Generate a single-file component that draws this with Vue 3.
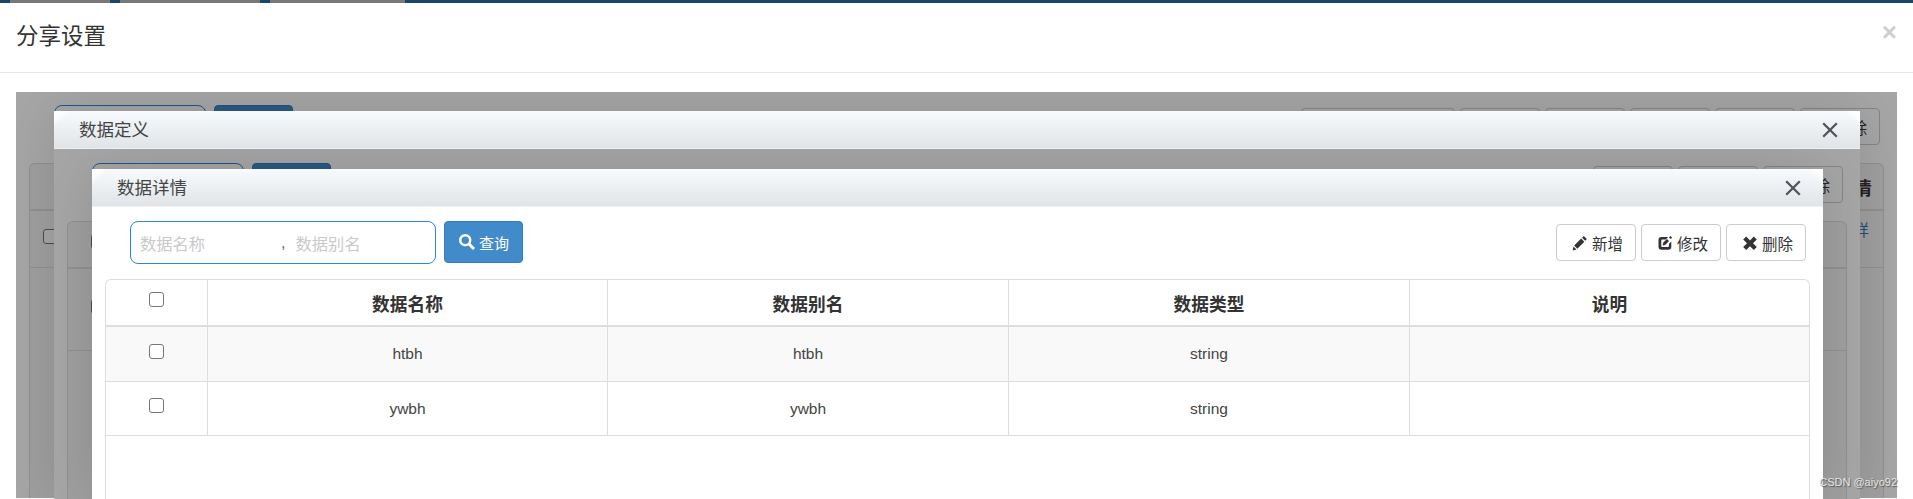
<script setup>
const icons = {
  pencil: 'M11.8 1l3.1 3.1-1.7 1.7-3.1-3.1zM9.2 3.6l3.1 3.1-7 7-3.1-3.1zM1.5 11.4l3 3-3.9 1z',
  edit: 'M4.4 2h6.8L8.8 4.4H5a.7.7 0 0 0-.7.7v6.2c0 .4.3.7.7.7h6.2c.4 0 .7-.3.7-.7V9l2.4-2.4v5.2a3 3 0 0 1-3 3H4.5a3 3 0 0 1-3-3V5a3 3 0 0 1 2.9-3zM6.3 7.6l3.6-3.6 2.1 2.1-3.6 3.6-2.8.7zM12 2.4l1.5-1.5 1.7 1.7-1.5 1.5z',
  remove: 'M4.2 1.6L8 5.4l3.8-3.8 3 3L11 8.3l3.8 3.8-3 3L8 11.3l-3.8 3.8-3-3L5 8.3 1.2 4.6z'
}

const topStrip = ['dark', 'dim', 'dark', 'dim', 'dark', 'dim', 'rest']

const layers = [
  {
    id: 1,
    buttons: [
      { label: '查看数据定义', icon: 'edit', wide: true },
      { label: '新增', icon: 'pencil' },
      { label: '修改', icon: 'edit' },
      { label: '复制', icon: 'edit' },
      { label: '分享', icon: 'edit' },
      { label: '删除', icon: 'remove' }
    ],
    noHeadCheck: true,
    cols: [{ label: '', width: '42px' }, { label: '' }, { label: '详情', width: '58px' }],
    rows: [['', '详']]
  },
  {
    id: 2,
    title: '数据定义',
    buttons: [
      { label: '新增', icon: 'pencil' },
      { label: '修改', icon: 'edit' },
      { label: '删除', icon: 'remove' }
    ],
    cols: [{ label: '', width: '61px' }, { label: '' }],
    rows: [['']]
  },
  {
    id: 3,
    title: '数据详情',
    first: '数据名称',
    second: '数据别名',
    buttons: [
      { label: '新增', icon: 'pencil' },
      { label: '修改', icon: 'edit' },
      { label: '删除', icon: 'remove' }
    ],
    cols: [
      { label: '', width: '102px' },
      { label: '数据名称', width: '400px' },
      { label: '数据别名', width: '401px' },
      { label: '数据类型', width: '401px' },
      { label: '说明' }
    ],
    rows: [
      ['htbh', 'htbh', 'string', ''],
      ['ywbh', 'ywbh', 'string', '']
    ]
  }
]
</script>

<template>
  <div class="page">
    <div class="strip">
      <span v-for="(seg, i) in topStrip" :key="i" :class="['seg', seg]"></span>
    </div>

    <header class="head">
      <h4>分享设置</h4>
      <span class="close">×</span>
    </header>

    <main class="body">
      <div class="frame">
        <section v-for="layer in layers" :key="layer.id" :class="['win', 'win-' + layer.id]">
          <div v-if="layer.title" class="win-head">
            <span>{{ layer.title }}</span>
            <svg class="win-close" viewBox="0 0 16 16">
              <path d="M1.2 1.2L14.8 14.8M14.8 1.2L1.2 14.8" />
            </svg>
          </div>

          <div class="win-body">
            <div class="toolbar">
              <div class="search-group">
                <div class="search">
                  <template v-if="layer.first">
                    <span class="holder">{{ layer.first }}</span>
                    <span class="comma">,</span>
                    <span class="holder">{{ layer.second }}</span>
                  </template>
                </div>
                <button class="btn-query">
                  <svg class="search-icon" viewBox="0 0 18 18">
                    <circle cx="7.2" cy="7.2" r="5" />
                    <path d="M11 11l5 5" />
                  </svg>
                  查询
                </button>
              </div>
              <div class="actions">
                <button
                  v-for="btn in layer.buttons"
                  :key="btn.label"
                  :class="['btn', { wide: btn.wide }]"
                >
                  <svg class="icon" viewBox="0 0 16 16"><path :d="icons[btn.icon]" /></svg>
                  {{ btn.label }}
                </button>
              </div>
            </div>

            <div class="table-wrap">
              <table>
                <colgroup>
                  <col v-for="(col, i) in layer.cols" :key="i" :style="{ width: col.width }" />
                </colgroup>
                <thead>
                  <tr>
                    <th v-for="(col, i) in layer.cols" :key="i">
                      <template v-if="i === 0">
                        <input v-if="!layer.noHeadCheck" type="checkbox" class="check" />
                      </template>
                      <template v-else>{{ col.label }}</template>
                    </th>
                  </tr>
                </thead>
                <tbody>
                  <tr v-for="(row, r) in layer.rows" :key="r" :class="{ odd: r % 2 === 0 }">
                    <td><input type="checkbox" class="check" /></td>
                    <td v-for="(cell, c) in row" :key="c">
                      <a v-if="cell === '详'" class="link">{{ cell }}</a>
                      <template v-else>{{ cell }}</template>
                    </td>
                  </tr>
                </tbody>
              </table>
            </div>

            <div v-if="layer.id < 3" class="mask"></div>
          </div>
        </section>
      </div>
    </main>

    <span class="mark">CSDN @aiyo92</span>
  </div>
</template>

<style>
html, body {
  margin: 0;
  height: 100%;
  overflow: hidden;
  background: #fff;
}
</style>

<style scoped>
.page {
  position: relative;
  height: 499px;
  display: flex;
  flex-direction: column;
  overflow: hidden;
  background: #fff;
  color: #333;
  font-family: "Liberation Sans", "Noto Sans CJK SC", sans-serif;
}

.strip {
  display: flex;
  height: 3px;
  flex: none;
}

.seg.dark {
  width: 10px;
  background: #1d456b;
}

.seg.dim {
  width: 100px;
  background: #787878;
}

.seg.dim:nth-child(4) {
  width: 140px;
}

.seg.dim:nth-child(6) {
  width: 135px;
}

.seg.rest {
  flex: 1;
  background: #1d456b;
}

.head {
  flex: none;
  height: 69px;
  box-sizing: content-box;
  display: flex;
  align-items: center;
  justify-content: space-between;
  padding: 0 16px;
  border-bottom: 1px solid #e5e5e5;
}

.head h4 {
  margin: 0 0 7px;
  font-size: 22.5px;
  font-weight: 400;
  color: #333;
}

.close {
  font-size: 26px;
  font-weight: 700;
  line-height: 1;
  color: #cfcfcf;
  margin-top: -12px;
}

.body {
  flex: 1;
  min-height: 0;
  padding: 19px 16px 0;
}

.frame {
  position: relative;
  height: 100%;
  overflow: hidden;
  background: #fff;
}

.win {
  display: flex;
  flex-direction: column;
  background: #fff;
}

.win-1 {
  height: 100%;
  margin-top: -1px;
}

.win-2, .win-3 {
  position: absolute;
  bottom: 0;
  box-shadow: 0 0 50px rgba(0, 0, 0, .13);
}

.win-2 {
  left: 38px;
  right: 37px;
  top: 19px;
}

.win-3 {
  left: 76px;
  right: 74px;
  top: 77px;
  clip-path: inset(-20px -37px 0 -38px);
}

.win-head {
  flex: none;
  height: 38px;
  box-sizing: border-box;
  display: flex;
  align-items: center;
  justify-content: space-between;
  padding: 0 22px 2px 25px;
  font-size: 17.5px;
  color: #444;
  border-bottom: 1px solid #eef0f2;
  background:
    linear-gradient(135deg, #fff 4px, rgba(255, 255, 255, 0) 12px),
    linear-gradient(225deg, #fff 4px, rgba(255, 255, 255, 0) 12px),
    linear-gradient(#f8fbfd, #e0e4e7);
  border-radius: 6px 6px 0 0;
}

.win-close {
  width: 16px;
  height: 16px;
  margin-top: 2px;
  fill: none;
  stroke: #50555c;
  stroke-width: 2.3;
}

.win-body {
  position: relative;
  flex: 1;
  min-height: 0;
  display: flex;
  flex-direction: column;
  padding: 14px 13px 0;
}

.mask {
  position: absolute;
  inset: 0;
  background: rgba(0, 0, 0, .35);
}

.toolbar {
  flex: none;
  height: 58px;
  display: flex;
  justify-content: space-between;
  align-items: flex-start;
  margin: 0 4px 0 25px;
}

.search-group {
  display: flex;
  gap: 8px;
}

.search {
  box-sizing: border-box;
  width: 152px;
  height: 43px;
  display: flex;
  align-items: center;
  padding: 0 9px;
  border: 1px solid #2a86e0;
  border-radius: 8px;
  background: #fff;
  font-size: 16.3px;
  color: #c9c9c9;
}

.win-3 .search {
  width: 306px;
}

.holder {
  width: 66px;
  white-space: nowrap;
}

.comma {
  margin: 0 10px 0 75px;
  color: #666;
}

.btn-query {
  box-sizing: border-box;
  width: 79px;
  height: 42px;
  display: flex;
  align-items: center;
  justify-content: center;
  gap: 3px;
  padding: 0;
  border: 1px solid #357ebd;
  border-radius: 4px;
  background: #428bca;
  color: #fff;
  font: inherit;
  font-size: 15px;
}

.search-icon {
  width: 18px;
  height: 18px;
  fill: none;
  stroke: #fff;
}

.search-icon circle {
  stroke-width: 2.4;
}

.search-icon path {
  stroke-width: 3;
}

.actions {
  display: flex;
  gap: 5px;
  margin-top: 3px;
}

.btn {
  box-sizing: border-box;
  width: 80px;
  height: 37px;
  display: flex;
  align-items: center;
  justify-content: center;
  gap: 4px;
  padding: 0 0 0 3px;
  border: 1px solid #ccc;
  border-radius: 4px;
  background: #fff;
  color: #333;
  font: inherit;
  font-size: 15.5px;
}

.btn.wide {
  width: 154px;
}

.icon {
  width: 16px;
  height: 16px;
  fill: #333;
}

.table-wrap {
  flex: 1;
  min-height: 0;
  box-sizing: border-box;
  border: 1px solid #ddd;
  border-bottom: 0;
  border-radius: 6px 6px 0 0;
}

.win-1 .table-wrap, .win-2 .table-wrap {
  background: #f4f4f4;
}

table {
  width: 100%;
  table-layout: fixed;
  border-collapse: separate;
  border-spacing: 0;
}

th, td {
  padding: 0;
  text-align: center;
  vertical-align: middle;
  border-right: 1px solid #ddd;
  border-bottom: 1px solid #ddd;
}

th:last-child, td:last-child {
  border-right: 0;
}

th {
  height: 47px;
  box-sizing: border-box;
  border-bottom-width: 2px;
  font-size: 17.7px;
  font-weight: 700;
  color: #333;
}

td {
  height: 54px;
  box-sizing: border-box;
  font-size: 15.5px;
  color: #444;
}

tr.odd td {
  height: 55px;
  background: #f9f9f9;
}

.win-1 tr.odd td {
  height: 57px;
  background: transparent;
}

.win-2 tr.odd td {
  height: 82px;
  background: transparent;
}

.check {
  appearance: none;
  display: block;
  box-sizing: border-box;
  width: 15px;
  height: 15px;
  margin: 0 auto 6px;
  border: 1px solid #767676;
  border-radius: 3px;
  background: #fff;
}

.link {
  display: block;
  text-align: right;
  padding: 0 14px 20px 0;
  color: #337ab7;
}

.mark {
  position: absolute;
  right: 16px;
  bottom: 11px;
  font-size: 11px;
  line-height: 11px;
  color: #e6e6e6;
  text-shadow: 1px 1px 1px #555;
}
</style>
